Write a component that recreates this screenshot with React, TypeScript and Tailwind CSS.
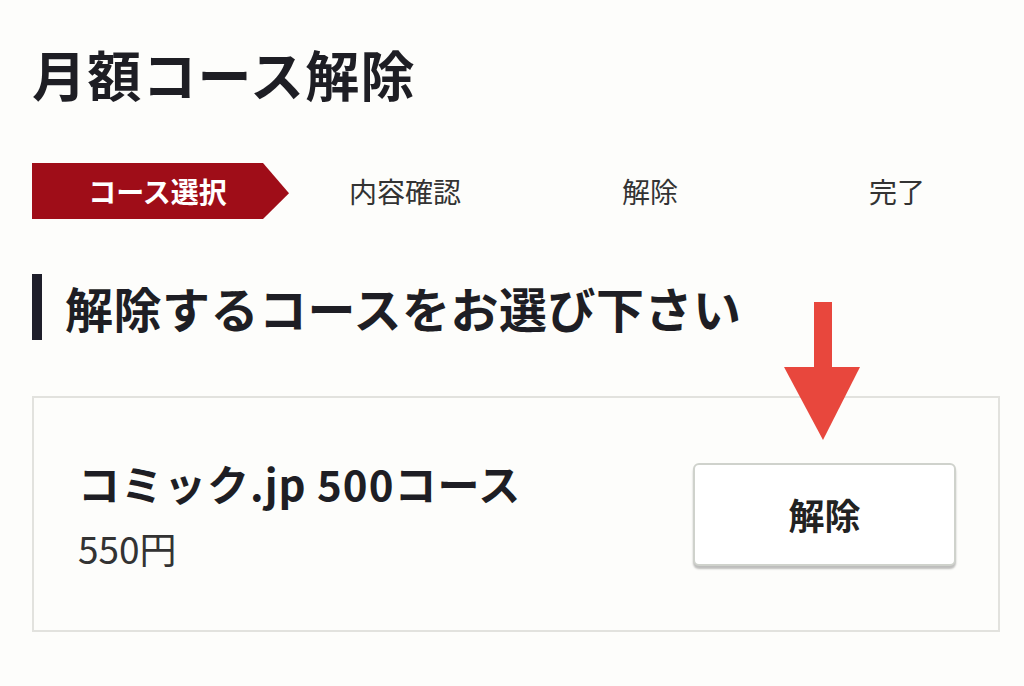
import React from 'react';

const font = { fontFamily: '"Noto Sans CJK JP", "Noto Sans", sans-serif' };

const steps = ['コース選択', '内容確認', '解除', '完了'];

const App: React.FC = () => {
  return (
    <div className="relative w-[1024px] h-[686px] overflow-hidden bg-[#fdfdfb] text-[#1e1e24]" style={font}>
      <div className="pl-[32px] pt-[47px]">
        <h1 className="text-[54px] leading-none font-bold tracking-[1.2px]">月額コース解除</h1>

        {/* steps */}
        <div className="mt-[62px] grid grid-cols-4 w-[992px] h-[56px] items-center">
          {steps.map((s, i) =>
            i === 0 ? (
              <div
                key={s}
                className="h-[56px] w-[257px] bg-[#9f0d18] flex items-center justify-center pr-[6px] text-white text-[28px] font-bold"
                style={{ clipPath: 'polygon(0 0, 231px 0, 100% 54%, 231px 100%, 0 100%)' }}
              >
                {s}
              </div>
            ) : (
              <div key={s} className={`text-center text-[28px] text-[#333] ${i === 1 ? 'pl-[2px]' : i === 2 ? 'pr-[4px]' : 'pr-[6px]'}`}>
                {s}
              </div>
            )
          )}
        </div>

        {/* section heading */}
        <div className="mt-[55px] flex items-center h-[66px]">
          <div className="w-[10px] h-[66px] bg-[#1e1e2a]" />
          <h2 className="ml-[23px] text-[48px] leading-none font-bold tracking-[0.5px]">解除するコースをお選び下さい</h2>
        </div>

        {/* course card */}
        <div className="mt-[56px] w-[968px] h-[236px] border-2 border-[#e2e2de] flex items-center justify-between pl-[44px] pr-[42px]">
          <div className="flex flex-col">
            <div className="text-[42px] leading-none font-bold tracking-[1px]">コミック.jp 500コース</div>
            <div className="mt-[26px] text-[37px] leading-none text-[#333]">550円</div>
          </div>
          <button className="w-[263px] h-[103px] rounded-[6px] border-2 border-[#cfd2cc] bg-white shadow-[0_3px_2px_rgba(0,0,0,0.25)] flex items-center justify-center text-[36px] font-bold text-[#222]">
            解除
          </button>
        </div>
      </div>

      {/* red annotation arrow */}
      <svg className="absolute left-[784px] top-[302px]" width="76" height="140" viewBox="0 0 76 140">
        <rect x="30" y="0" width="18" height="70" fill="#e8473d" />
        <polygon points="0,65 76,65 39,138" fill="#e8473d" />
      </svg>
    </div>
  );
};

export default App;
